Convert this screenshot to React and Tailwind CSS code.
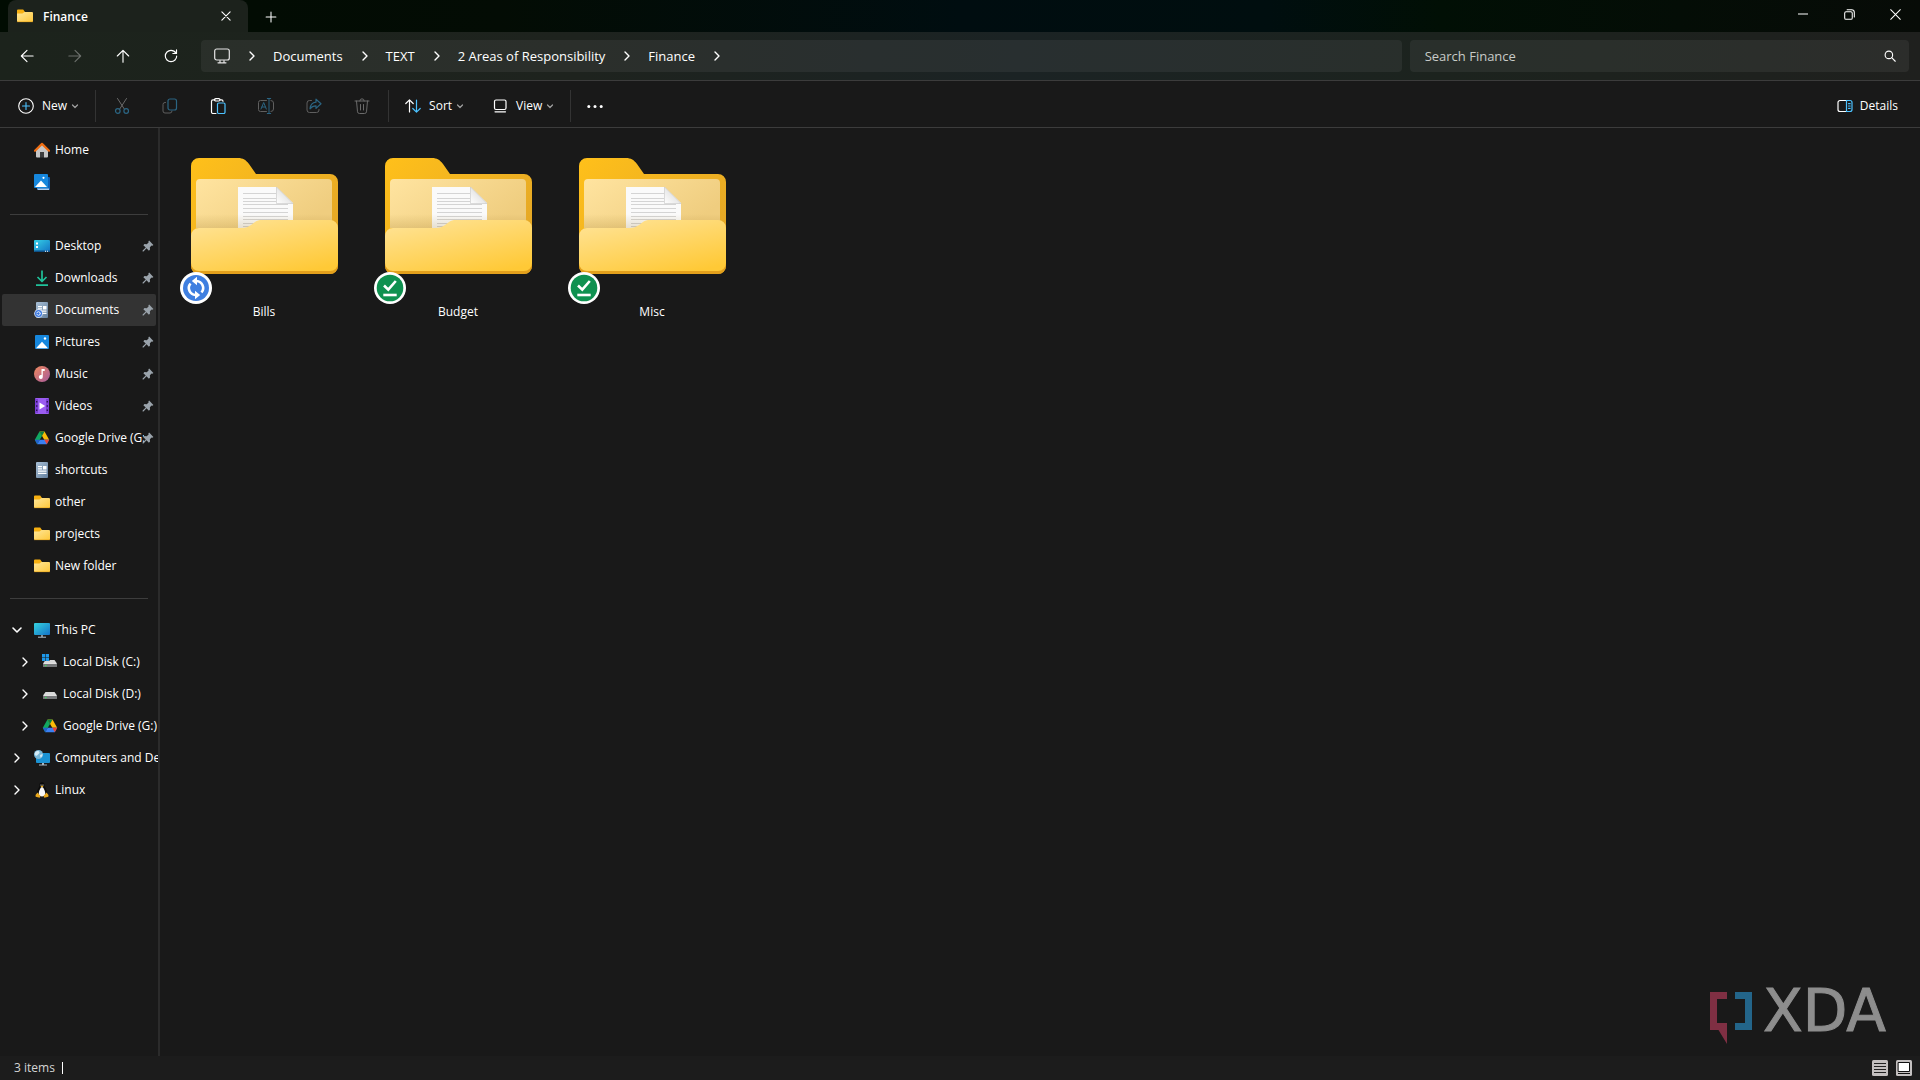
import React from "react";

const Svg = ({ size = 16, className = "", children, ...rest }) => (
  <svg
    width={size}
    height={size}
    viewBox="0 0 16 16"
    fill="none"
    stroke="currentColor"
    strokeLinecap="round"
    strokeLinejoin="round"
    aria-hidden="true"
    className={`shrink-0 ${className}`}
    {...rest}
  >
    {children}
  </svg>
);

const BLUE = "#4cc2ff";

/* ---------- chevrons ---------- */
const ChevronRight = ({ className = "" }) => (
  <Svg className={className} strokeWidth="1.4">
    <path d="M6 4l4 4-4 4" />
  </Svg>
);
const ChevronDown = ({ className = "" }) => (
  <Svg className={className} strokeWidth="1.6">
    <path d="M4 6l4 4 4-4" />
  </Svg>
);
const SmallDown = () => (
  <Svg size={8} className="text-neutral-400" strokeWidth="2.4">
    <path d="M3 6l5 5 5-5" />
  </Svg>
);

/* ---------- sidebar icons ---------- */
const FolderIcon = () => (
  <Svg stroke="none">
    <defs>
      <linearGradient id="sf" x1="0" y1="0" x2="1" y2="1">
        <stop offset="0" stopColor="#ffe79a" />
        <stop offset="1" stopColor="#fec83b" />
      </linearGradient>
    </defs>
    <path d="M0 2.500a1 1 0 011-1h5.200L8 4 6 6H0z" fill="#f7b011" />
    <path d="M0 5.500h5.200c.6 0 .9-.2 1.300-.7L7.300 4H15a1 1 0 011 1v8a1 1 0 01-1 1H1a1 1 0 01-1-1z" fill="url(#sf)" />
    <path d="M.3 13.700h15.400" stroke="#e5a21a" strokeWidth=".6" />
  </Svg>
);
const HomeIcon = () => (
  <Svg stroke="none">
    <path d="M2 8l6-6 6 6v6.500a1 1 0 01-1 1h-3v-5H6v5H3a1 1 0 01-1-1z" fill="#c6c6c6" />
    <path d="M1 8.700L8 1.900l7 6.800" fill="none" stroke="#ee6d12" strokeWidth="2.200" />
    <path d="M6 10h4v5.500H6z" fill="#3c3c3c" />
  </Svg>
);
const GalleryIcon = () => (
  <Svg stroke="none">
    <path d="M3 3h12a1 1 0 011 1v11a1 1 0 01-1 1H4a1 1 0 01-1-1z" fill="#0e5fb4" />
    <path d="M3 14.500h12V16H4z" fill="#a9cdf0" />
    <rect width="14" height="14" rx="1" fill="#1687dd" />
    <path d="M1 13l6-6.500 6 6.500z" fill="#fff" />
    <circle cx="9.500" cy="3.800" r="1.100" fill="#fff" />
  </Svg>
);
const DesktopIcon = () => (
  <Svg stroke="none">
    <defs>
      <linearGradient id="dk" x1="0" y1="0" x2="1" y2="1">
        <stop offset="0" stopColor="#35d1e6" />
        <stop offset="1" stopColor="#1272c4" />
      </linearGradient>
    </defs>
    <rect y="2" width="16" height="12" rx="1" fill="url(#dk)" />
    <path d="M2 4.500h2v2H2zM2 8h2v2H2z" fill="#fff" />
    <path d="M0 12.500h16v.5a1 1 0 01-1 1H1a1 1 0 01-1-1z" fill="#0e4f86" />
    <path d="M11 12.700h1v1h-1zM13 12.700h1v1h-1z" fill="#fff" />
  </Svg>
);
const DownloadsIcon = () => (
  <Svg stroke="#1fc29a" strokeWidth="1.700" strokeLinecap="butt">
    <path d="M8 .5v10.500M3.500 7L8 11.500 12.500 7M2 15.200h12" />
  </Svg>
);
const DocumentIcon = ({ sync }) => (
  <Svg stroke="none">
    <defs>
      <linearGradient id="dc" x1="0" y1="0" x2="1" y2="1">
        <stop offset="0" stopColor="#a9c0d6" />
        <stop offset="1" stopColor="#64809e" />
      </linearGradient>
    </defs>
    <rect x="2" width="12" height="16" rx="1" fill="url(#dc)" />
    <path d="M4 4h4v1.200H4zM4 6.200h4v1.200H4zM9 4h3.500v3.400H9zM4 8.500h8.500v1.200H4zM4 10.700h8.500v1.200H4z" fill="#fff" />
    {sync && (
      <g>
        <circle cx="4.500" cy="11.500" r="4.300" fill="#dfe9fb" />
        <circle cx="4.500" cy="11.500" r="3.500" fill="#3b78e0" />
        <circle cx="4.500" cy="11.500" r="1.800" fill="none" stroke="#fff" strokeWidth=".9" strokeDasharray="4.200 1.450" />
      </g>
    )}
  </Svg>
);
const PicturesIcon = () => (
  <Svg stroke="none">
    <rect x="1" y="1" width="14" height="14" rx="1" fill="#1687dd" />
    <path d="M2 14.200l6-6.500 6 6.500z" fill="#fff" />
    <circle cx="11" cy="4.500" r="1.200" fill="#fff" />
  </Svg>
);
const MusicIcon = () => (
  <Svg stroke="none">
    <defs>
      <linearGradient id="mu" x1="0" y1="0" x2="1" y2="1">
        <stop offset="0" stopColor="#f08a5d" />
        <stop offset="1" stopColor="#a65a9c" />
      </linearGradient>
    </defs>
    <circle cx="8" cy="8" r="8" fill="url(#mu)" />
    <path d="M7.500 3h3.200v2H8.800v6a2 2 0 11-1.300-1.900z" fill="#fff" />
  </Svg>
);
const VideosIcon = () => (
  <Svg stroke="none">
    <rect x="1" width="14" height="16" rx="1" fill="#9a5cf0" />
    <path d="M1 1h3v14H1zM12 1h3v14h-3z" fill="#7a3dd4" />
    <path d="M2 3h1.400v1.500H2zM2 7.200h1.400v1.500H2zM2 11.500h1.400V13H2zM12.600 3H14v1.500h-1.400zM12.600 7.200H14v1.500h-1.400zM12.600 11.500H14V13h-1.400z" fill="#2b1450" />
    <path d="M5.500 4.500L11.200 8l-5.700 3.500z" fill="#fff" />
  </Svg>
);
const DriveIcon = () => (
  <Svg stroke="none">
    <path d="M5.500 1.500L.8 9.800l2.400 4.400L8 6z" fill="#11a861" />
    <path d="M5.500 1.500h5L15.200 9.800h-4.900z" fill="#fcbc08" />
    <path d="M5.500 1.500h5L8 6z" fill="#0b8043" />
    <path d="M3.200 14.200l2.500-4.400h9.500l-2.400 4.400z" fill="#3a80f2" />
    <path d="M.8 9.800h4.900l-2.500 4.400z" fill="#2261d0" />
    <path d="M10.300 9.800h4.900l-2.400 4.400z" fill="#ea4335" />
  </Svg>
);
const PcIcon = () => (
  <Svg stroke="none">
    <defs>
      <linearGradient id="pc" x1="0" y1="0" x2="1" y2="1">
        <stop offset="0" stopColor="#35d3df" />
        <stop offset="1" stopColor="#1472c8" />
      </linearGradient>
    </defs>
    <rect y="1" width="16" height="12" rx="1" fill="url(#pc)" />
    <path d="M7 13h2v2H7z" fill="#7b8a97" />
    <path d="M4 14.700h8v1H4z" fill="#b7c2cc" />
  </Svg>
);
const DiskIcon = ({ win }) => (
  <Svg stroke="none">
    <path d="M3.500 6h9L15 9.500H1z" fill="#d9d9d9" />
    <rect x="1" y="9" width="14" height="4" rx=".6" fill="#77797b" />
    <path d="M1.500 9h13v.9h-13z" fill="#eee" />
    <path d="M3 11h1.500v1.200H3z" fill="#3ddc5b" />
    {win && (
      <g>
        <path d="M-.5-.5h8v7.500h-8z" fill="#191919" />
        <path d="M0 0h3.200v3.200H0zM3.800 0H7v3.200H3.800zM0 3.800h3.200V7H0zM3.800 3.800H7V7H3.800z" fill="#1d97e8" />
      </g>
    )}
  </Svg>
);
const NetworkIcon = () => (
  <Svg stroke="none">
    <rect x="2" y="3" width="14" height="10" rx="1" fill="#1b93d4" />
    <path d="M8 13h2v2H8zM5 14.600h8v1H5z" fill="#aab6c0" />
    <circle cx="4.500" cy="4.500" r="4.500" fill="#79b7d8" />
    <path d="M1.200 2.200C3 .3 5 .8 5.500 2S4 4.500 3 5.500 1 5 .6 4zM6 5l2.500-1c.3 1.500-.5 3-2 3.800z" fill="#d3ebf7" />
  </Svg>
);
const LinuxIcon = () => (
  <Svg stroke="none">
    <path d="M8 .3c-2 0-2.700 1.500-2.500 3.300.1 1.600-2.700 4-2.700 8.400l2.700 3h5l2.700-3c0-4.400-2.800-6.800-2.700-8.400C10.700 1.800 10 .3 8 .3z" fill="#0a0a0a" />
    <path d="M8 5c-1.200 0-3.200 3.500-3.200 6.500 0 2 1.200 3 3.200 3s3.200-1 3.200-3C11.200 8.500 9.200 5 8 5z" fill="#f7f7f7" />
    <circle cx="7" cy="3" r=".6" fill="#fff" />
    <circle cx="9" cy="3" r=".6" fill="#fff" />
    <path d="M6.500 4.200L8 3.600l1.500.6L8 5.500z" fill="#f2b21c" />
    <path d="M1.500 13l2-2.500 3 3.500-.8 1.700-4-.9zM14.500 13l-2-2.500-3 3.500.8 1.700 4-.9z" fill="#e9a71c" />
  </Svg>
);
const PinIcon = () => (
  <Svg size={12} stroke="none" className="text-[#9aa3ab]">
    <path d="M9.500.8l5.700 5.700-1.400 1-1-.2-2.300 2.500.2 3-1.500 1.500-3.200-3.200-4 4.200H.8v-1.200l4.200-4L1.800 6.900l1.500-1.500 3 .2 2.500-2.300-.3-1.200z" fill="currentColor" />
  </Svg>
);

/* ---------- large folder artwork ---------- */
const BigFolder = () => (
  <svg viewBox="0 0 147 116" className="w-[147px]" aria-hidden="true">
    <defs>
      <linearGradient id="back" x1="0" y1="0" x2="1" y2=".8">
        <stop offset="0" stopColor="#ffc01a" />
        <stop offset="1" stopColor="#e2a527" />
      </linearGradient>
      <linearGradient id="inner" x1="0" y1="0" x2="1" y2=".5">
        <stop offset="0" stopColor="#ffe4a0" />
        <stop offset="1" stopColor="#efcd7f" />
      </linearGradient>
      <linearGradient id="front" x1=".2" y1="0" x2=".8" y2="1">
        <stop offset="0" stopColor="#ffe292" />
        <stop offset="1" stopColor="#ffc936" />
      </linearGradient>
      <linearGradient id="shade" x1="0" y1="0" x2="0" y2="1">
        <stop offset="0" stopColor="#8a6410" stopOpacity="0" />
        <stop offset="1" stopColor="#8a6410" stopOpacity=".18" />
      </linearGradient>
      <linearGradient id="fold" x1="0" y1="1" x2="1" y2="0">
        <stop offset="0" stopColor="#ffffff" />
        <stop offset="1" stopColor="#cfcfcf" />
      </linearGradient>
    </defs>
    <path d="M0 8a8 8 0 018-8h39c5 0 8 2 11 6l7 10h74a8 8 0 018 8v84a8 8 0 01-8 8H8a8 8 0 01-8-8z" fill="url(#back)" />
    <path d="M5 25a4 4 0 014-4h128a4 4 0 014 4v45H5z" fill="url(#inner)" />
    <path d="M47 29h38.500L102 45v30H47z" fill="#fafafa" />
    <path d="M52 35.500h33M52 40.500h33M52 43.500h33M52 46.500h45M52 50.500h45M52 54.500h45M52 58.500h45M52 61.500h45M52 65.500h45M52 68.500h45" stroke="#d4d4d4" />
    <path d="M85.500 29L102 45.500H85.500z" fill="url(#fold)" stroke="#c4c4c4" strokeWidth=".6" />
    <path d="M5 56h136v14H5z" fill="url(#shade)" />
    <path d="M0 105h147v3a8 8 0 01-8 8H8a8 8 0 01-8-8z" fill="#e3a01c" />
    <path d="M0 78a8 8 0 018-8h43c4 0 6-1 9-3l4-3c2-1.500 4-2 7-2h68a8 8 0 018 8v35a8 8 0 01-8 8H8a8 8 0 01-8-8z" fill="url(#front)" />
  </svg>
);

const SyncBadge = () => (
  <svg width="32" height="32" viewBox="0 0 32 32" fill="none" aria-hidden="true">
    <circle cx="16" cy="16" r="16" fill="#fff" />
    <circle cx="16" cy="16" r="13" fill="#3f7fe0" />
    <path d="M16.500 9A7 7 0 0121.500 20.500M15.500 23A7 7 0 0110.500 11.500" stroke="#fff" strokeWidth="2.600" />
    <path d="M17 4.800l-5.200 4.200 5.200 4.200zM15 27.200l5.200-4.200-5.200-4.200z" fill="#fff" />
  </svg>
);
const DoneBadge = () => (
  <svg width="32" height="32" viewBox="0 0 32 32" fill="none" aria-hidden="true">
    <circle cx="16" cy="16" r="16" fill="#fff" />
    <circle cx="16" cy="16" r="13.300" fill="#0f9150" />
    <path d="M10 13.500l4.300 4.200L21.800 9" stroke="#fff" strokeWidth="2.600" />
    <path d="M9.300 23h13.400" stroke="#fff" strokeWidth="2.600" />
  </svg>
);

/* ---------- data ---------- */
const crumbs = ["Documents", "TEXT", "2 Areas of Responsibility", "Finance"];

const pinned = [
  { label: "Desktop", icon: <DesktopIcon />, pin: true },
  { label: "Downloads", icon: <DownloadsIcon />, pin: true },
  { label: "Documents", icon: <DocumentIcon sync />, pin: true, active: true },
  { label: "Pictures", icon: <PicturesIcon />, pin: true },
  { label: "Music", icon: <MusicIcon />, pin: true },
  { label: "Videos", icon: <VideosIcon />, pin: true },
  { label: "Google Drive (G:)", icon: <DriveIcon />, pin: true },
  { label: "shortcuts", icon: <DocumentIcon /> },
  { label: "other", icon: <FolderIcon /> },
  { label: "projects", icon: <FolderIcon /> },
  { label: "New folder", icon: <FolderIcon /> },
];

const tree = [
  { label: "This PC", icon: <PcIcon />, open: true },
  { label: "Local Disk (C:)", icon: <DiskIcon win />, child: true },
  { label: "Local Disk (D:)", icon: <DiskIcon />, child: true },
  { label: "Google Drive (G:)", icon: <DriveIcon />, child: true },
  { label: "Computers and Devices", icon: <NetworkIcon /> },
  { label: "Linux", icon: <LinuxIcon /> },
];

const folders = [
  { name: "Bills", badge: <SyncBadge /> },
  { name: "Budget", badge: <DoneBadge /> },
  { name: "Misc", badge: <DoneBadge /> },
];

/* ---------- pieces ---------- */
const SideItem = ({ label, icon, pin, active, aria }) => (
  <li>
    <button
      type="button"
      aria-label={aria}
      className={`flex h-8 w-full items-center rounded-xs pr-0.5 pl-8 text-left ${active ? "bg-[#333333]" : ""}`}
    >
      {icon}
      <span className="-mr-0.5 ml-[5px] min-w-0 flex-1 overflow-hidden whitespace-nowrap">{label}</span>
      {pin && <PinIcon />}
    </button>
  </li>
);

const TreeItem = ({ label, icon, open, child }) => (
  <li>
    <button
      type="button"
      aria-expanded={!!open}
      className={`flex h-8 w-full items-center overflow-hidden text-left ${child ? "pl-[15px]" : "pl-[7px]"}`}
    >
      {open ? <ChevronDown /> : <ChevronRight />}
      <span className="ml-[9px] flex items-center gap-[5px]">
        {icon}
        <span className="whitespace-nowrap">{label}</span>
      </span>
    </button>
  </li>
);

const Rule = () => (
  <div className="flex h-8 items-center pr-2 pl-2">
    <hr className="w-full border-[#3d3d3d]" />
  </div>
);

const NavButton = ({ label, dim, children }) => (
  <button
    type="button"
    aria-label={label}
    className={`flex h-8 w-12 items-center justify-center ${dim ? "text-[#6b6f6b]" : "text-white"}`}
  >
    {children}
  </button>
);

const ToolButton = ({ label, children }) => (
  <button type="button" aria-label={label} className="flex h-8 w-12 items-center justify-center">
    {children}
  </button>
);

const Divider = () => <div className="h-8 w-px bg-[#333333]" />;

export default function App() {
  return (
    <div className="flex min-h-screen flex-col bg-[#191919] font-['Open_Sans','Noto_Sans',sans-serif] text-[12px] leading-4 text-white">
      {/* title bar */}
      <header className="flex h-8 bg-[linear-gradient(90deg,#010c02,#030c04_26%,#000d10_50%,#000e0f_66%,#010f05_75%,#070b07)] pr-0.5 pl-2">
        <div className="flex w-60 items-center rounded-t-lg bg-[#1c221c] pr-3.5 pl-[9px]">
          <FolderIcon />
          <h1 className="ml-2.5 flex-1 pt-0.5 text-[12px] font-semibold">Finance</h1>
          <button type="button" aria-label="Close tab" className="flex size-4 items-center justify-center">
            <Svg size={12} strokeWidth="1.500">
              <path d="M2.500 2.500l11 11M13.500 2.500l-11 11" />
            </Svg>
          </button>
        </div>
        <button type="button" aria-label="New tab" className="ml-[15px] flex w-4 items-center justify-center pt-0.5">
          <Svg size={12} strokeWidth="1.400">
            <path d="M8 1.500v13M1.500 8h13" />
          </Svg>
        </button>
        <div className="ml-auto flex pb-1">
          <button type="button" aria-label="Minimize" className="flex w-[46px] items-center justify-center">
            <Svg size={10}>
              <path d="M0 8h16" strokeWidth="1.600" />
            </Svg>
          </button>
          <button type="button" aria-label="Restore" className="flex w-[46px] items-center justify-center">
            <Svg size={11} strokeWidth="1.500">
              <rect x="1" y="4" width="11" height="11" rx="2" />
              <path d="M4.500 1H11a4 4 0 014 4v6.500" />
            </Svg>
          </button>
          <button type="button" aria-label="Close" className="flex w-[46px] items-center justify-center">
            <Svg size={11} strokeWidth="1.500">
              <path d="M1 1l14 14M15 1L1 15" />
            </Svg>
          </button>
        </div>
      </header>

      {/* navigation bar */}
      <nav className="flex h-[49px] items-center border-b border-[#3c3c3c] bg-[linear-gradient(90deg,#1c231c,#1e231e_30%,#1b2324_53%,#1c231e_75%,#1f201e)] pr-[11px] pl-[3px]">
        <NavButton label="Back">
          <Svg size={14} strokeWidth="1.300">
            <path d="M15 8H1.500M8 1.500L1.500 8 8 14.500" />
          </Svg>
        </NavButton>
        <NavButton label="Forward" dim>
          <Svg size={14} strokeWidth="1.300">
            <path d="M1 8h13.500M8 1.500L14.500 8 8 14.500" />
          </Svg>
        </NavButton>
        <NavButton label="Up">
          <Svg size={14} strokeWidth="1.300">
            <path d="M8 15V1.500M1.500 8L8 1.500 14.500 8" />
          </Svg>
        </NavButton>
        <NavButton label="Refresh">
          <Svg size={14} strokeWidth="1.300">
            <path d="M14.500 8A6.500 6.500 0 118 1.500c2.500 0 4.500 1.200 6 3.500M14.300 1v4.200h-4.200" />
          </Svg>
        </NavButton>

        <div className="ml-1.5 flex h-8 flex-1 items-center rounded bg-white/6 pl-[13px] text-[13px] leading-5">
          <button type="button" aria-label="This PC" className="mr-3">
            <Svg strokeWidth="1.200" className="text-neutral-200">
              <rect x=".7" y="1" width="14.600" height="11" rx="2" />
              <path d="M6 12.500v2M10 12.500v2M4 14.800h8" />
            </Svg>
          </button>
          <ol className="flex items-center">
            <li className="flex items-center">
              <ChevronRight className="ml-0.5" />
            </li>
            {crumbs.map((c) => (
              <li key={c} className="flex items-center">
                <button type="button" className="ml-[13px] whitespace-nowrap">{c}</button>
                <ChevronRight className="ml-3.5" />
              </li>
            ))}
          </ol>
        </div>

        <label className="ml-2 flex h-8 w-[26.2%] items-center rounded bg-white/6 pr-[13px] pl-[15px]">
          <input
            type="search"
            aria-label="Search Finance"
            placeholder="Search Finance"
            className="min-w-0 flex-1 bg-transparent text-[13px] leading-5 outline-none placeholder:text-[#c8cbc8]"
          />
          <Svg size={12} strokeWidth="1.500">
            <circle cx="6.500" cy="6.500" r="5" />
            <path d="M10.300 10.300L15 15" />
          </Svg>
        </label>
      </nav>

      {/* command bar */}
      <div className="flex h-[47px] items-center border-b border-[#3c3c3c] pt-[3px] pr-[22px] pl-[18px]">
        <button type="button" className="mr-4 flex items-center">
          <Svg strokeWidth="1.100">
            <circle cx="8" cy="8" r="7.300" />
            <path d="M8 4.500v7M4.500 8h7" stroke={BLUE} />
          </Svg>
          <span className="mr-1 ml-2">New</span>
          <SmallDown />
        </button>
        <Divider />
        <div className="mx-0.5 flex">
          <ToolButton label="Cut">
            <Svg className="text-[#6b6b6b]">
              <path d="M3.500 0.500l6.800 10.500M12.500 .5L5.700 11" />
              <g stroke="#2b6583" strokeWidth="1.200">
                <circle cx="3.800" cy="13" r="2.300" />
                <circle cx="12.200" cy="13" r="2.300" />
              </g>
            </Svg>
          </ToolButton>
          <ToolButton label="Copy">
            <Svg className="text-[#5f5f5f]">
              <path d="M3.500 4.500H3a2 2 0 00-2 2V13a2 2 0 002 2h5a2 2 0 002-2" />
              <rect x="6" y="1" width="8.500" height="11" rx="2" stroke="#2b6583" strokeWidth="1.200" />
            </Svg>
          </ToolButton>
          <ToolButton label="Paste">
            <Svg strokeWidth="1.200">
              <path d="M5 1.800H3a1.500 1.500 0 00-1.500 1.500V14A1.500 1.500 0 003 15.500h3M10 1.800h1.500A1.500 1.500 0 0113 3.300" />
              <rect x="4.500" y=".6" width="5.500" height="2.400" rx="1.200" />
              <rect x="7.500" y="5" width="7.500" height="10.500" rx="1.200" stroke={BLUE} />
            </Svg>
          </ToolButton>
          <ToolButton label="Rename">
            <Svg className="text-[#5f5f5f]">
              <path d="M8.500 2.500H2.500A2 2 0 00.5 4.500v7a2 2 0 002 2h6M13 2.500a2.500 2.500 0 012.500 2.500v6a2.500 2.500 0 01-2.500 2.500" />
              <path d="M3 11l2.700-6.500L8.300 11M3.900 9h3.500M11 .5v15M9.300.5h3.400M9.300 15.500h3.400" stroke="#2b6583" />
            </Svg>
          </ToolButton>
          <ToolButton label="Share">
            <Svg className="text-[#5f5f5f]">
              <path d="M5.500 2.500H3.500a2.500 2.500 0 00-2.500 2.500v7a2.500 2.500 0 002.500 2.500h7a2.500 2.500 0 002.500-2.500v-.5" />
              <path d="M10 1.200l5 4.600-5 4.600V7.800c-2.800 0-4.500.8-6 3 .3-3.500 2.500-6.200 6-6.600z" stroke="#2b6583" strokeWidth="1.200" />
            </Svg>
          </ToolButton>
          <ToolButton label="Delete">
            <Svg className="text-[#6b6b6b]">
              <path d="M1 3h14M5.800 3a2.200 2.200 0 014.400 0M2.500 3l1 10.800A2 2 0 005.500 15.500h5a2 2 0 002-1.700l1-10.800M6.500 6.500v5.500M9.500 6.500v5.500" />
            </Svg>
          </ToolButton>
        </div>
        <Divider />
        <button type="button" className="ml-4 flex items-center">
          <Svg strokeWidth="1.200">
            <path d="M4.500 14V2M.8 5.500L4.500 1.800l3.700 3.700" />
            <path d="M11.500 2v12M7.800 10.500l3.700 3.700 3.700-3.700" stroke={BLUE} />
          </Svg>
          <span className="mr-1 ml-2">Sort</span>
          <SmallDown />
        </button>
        <button type="button" className="mr-4 ml-7 flex items-center">
          <Svg strokeWidth="1.200">
            <rect x="2.500" y="2" width="11.500" height="9.500" rx="1.500" />
            <path d="M3 13.800h10.500" />
          </Svg>
          <span className="mr-1 ml-2">View</span>
          <SmallDown />
        </button>
        <Divider />
        <button type="button" aria-label="More" className="ml-4 flex items-center">
          <Svg stroke="none">
            <g fill="#fff">
              <circle cx="1.800" cy="8.500" r="1.500" />
              <circle cx="8" cy="8.500" r="1.500" />
              <circle cx="14.200" cy="8.500" r="1.500" />
            </g>
          </Svg>
        </button>
        <button type="button" className="ml-auto flex items-center gap-[7px]">
          <Svg strokeWidth="1.200">
            <path d="M9.500 2.500H3a2 2 0 00-2 2v7a2 2 0 002 2h6.500" />
            <path d="M9.500 2.500H13a2 2 0 012 2v7a2 2 0 01-2 2H9.500zM11.500 5.700h1.700M11.500 8h1.700M11.500 10.300h1.700" stroke={BLUE} />
          </Svg>
          Details
        </button>
      </div>

      {/* body */}
      <div className="flex flex-1">
        <aside className="w-40 shrink-0 border-r-2 border-[#2b2b2b] pt-1.5 pl-0.5">
          <div className="pr-0.5">
            <ul>
              <SideItem label="Home" icon={<HomeIcon />} />
              <SideItem label="" icon={<GalleryIcon />} aria="Gallery" />
            </ul>
            <Rule />
            <ul>
              {pinned.map((p) => (
                <SideItem key={p.label} {...p} />
              ))}
            </ul>
            <Rule />
          </div>
          <ul>
            {tree.map((t) => (
              <TreeItem key={t.label} {...t} />
            ))}
          </ul>
        </aside>

        <main className="flex flex-1 flex-col">
          <ul className="flex flex-wrap pt-[30px] pl-[7px]">
            {folders.map((f) => (
              <li key={f.name} className="flex w-[194px] flex-col items-center">
                <div className="relative">
                  <BigFolder />
                  <span className="absolute top-[114px] -left-[11px]">{f.badge}</span>
                </div>
                <span className="mt-[30px]">{f.name}</span>
              </li>
            ))}
          </ul>
          <div className="mt-auto mr-[34px] flex h-16 items-start self-end" role="img" aria-label="XDA">
            <svg width="43" height="52" viewBox="0 0 43 52" aria-hidden="true">
              <path d="M0 0h17v7H7v24h10v21L8.500 38H0z" fill="#7f2f43" />
              <path d="M25 0h17v38H25v-7h10V7H25z" fill="#23658a" />
            </svg>
            <span className="ml-2.5 font-['DejaVu_Sans',sans-serif] text-[58px] leading-[38px] text-[#8d8d8d] [-webkit-text-stroke:1px_#8d8d8d]">XDA</span>
          </div>
        </main>
      </div>

      {/* status bar */}
      <footer className="flex h-6 items-center bg-[#1c1c1c] pr-2 pl-3.5">
        <span className="text-neutral-300">3 items</span>
        <span className="ml-[7px] h-3 w-px bg-white" />
        <div className="ml-auto flex gap-2">
          <button type="button" aria-label="Details view">
            <Svg stroke="none">
              <rect width="16" height="16" rx="1.500" fill="#c4c0c0" />
              <path d="M2 3.500h12M2 6.500h12M2 9.500h12M2 12.500h12" stroke="#222" strokeLinecap="butt" />
            </Svg>
          </button>
          <button type="button" aria-label="Large icons view">
            <Svg stroke="none">
              <rect width="16" height="16" rx="1.500" fill="#c4c0c0" />
              <rect x="2.500" y="2.500" width="11" height="9" fill="#fff" stroke="#111" />
              <path d="M2 13.500h12" stroke="#111" strokeLinecap="butt" />
            </Svg>
          </button>
        </div>
      </footer>
    </div>
  );
}
